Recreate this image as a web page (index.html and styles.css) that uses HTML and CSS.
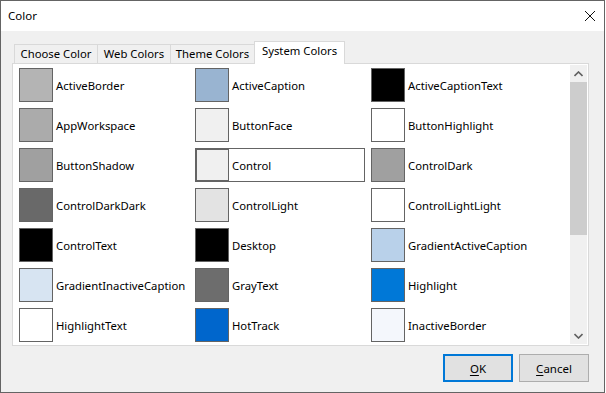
FILE: index.html
```html
<!DOCTYPE html>
<html>
<head>
<meta charset="utf-8">
<title>Color</title>
<link rel="stylesheet" href="styles.css">
</head>
<body>
<div class="window">
  <div class="titlebar">
    <span class="title">Color</span>
    <svg class="close" width="12" height="12" viewBox="0 0 12 12"><path d="M1 1 L11 11 M11 1 L1 11" stroke="#111" stroke-width="1" fill="none"/></svg>
  </div>
  <div class="body">
    <div class="tabs">
      <div class="tab t1">Choose Color</div>
      <div class="tab t2">Web Colors</div>
      <div class="tab t3">Theme Colors</div>
      <div class="tab t4 active">System Colors</div>
    </div>
    <div class="panel">
      <div class="list">
        <div class="grid">
          <div class="item"><span class="sw" style="background:#b4b4b4"></span><span class="lbl">ActiveBorder</span></div>
          <div class="item"><span class="sw" style="background:#99b4d1"></span><span class="lbl">ActiveCaption</span></div>
          <div class="item"><span class="sw" style="background:#000000"></span><span class="lbl">ActiveCaptionText</span></div>
          <div class="item"><span class="sw" style="background:#ababab"></span><span class="lbl">AppWorkspace</span></div>
          <div class="item"><span class="sw" style="background:#f0f0f0"></span><span class="lbl">ButtonFace</span></div>
          <div class="item"><span class="sw" style="background:#ffffff"></span><span class="lbl">ButtonHighlight</span></div>
          <div class="item"><span class="sw" style="background:#a0a0a0"></span><span class="lbl">ButtonShadow</span></div>
          <div class="item selected"><span class="sw" style="background:#f0f0f0"></span><span class="lbl">Control</span></div>
          <div class="item"><span class="sw" style="background:#a0a0a0"></span><span class="lbl">ControlDark</span></div>
          <div class="item"><span class="sw" style="background:#696969"></span><span class="lbl">ControlDarkDark</span></div>
          <div class="item"><span class="sw" style="background:#e3e3e3"></span><span class="lbl">ControlLight</span></div>
          <div class="item"><span class="sw" style="background:#ffffff"></span><span class="lbl">ControlLightLight</span></div>
          <div class="item"><span class="sw" style="background:#000000"></span><span class="lbl">ControlText</span></div>
          <div class="item"><span class="sw" style="background:#000000"></span><span class="lbl">Desktop</span></div>
          <div class="item"><span class="sw" style="background:#b9d1ea"></span><span class="lbl">GradientActiveCaption</span></div>
          <div class="item"><span class="sw" style="background:#d7e4f2"></span><span class="lbl">GradientInactiveCaption</span></div>
          <div class="item"><span class="sw" style="background:#6d6d6d"></span><span class="lbl">GrayText</span></div>
          <div class="item"><span class="sw" style="background:#0078d7"></span><span class="lbl">Highlight</span></div>
          <div class="item"><span class="sw" style="background:#ffffff"></span><span class="lbl">HighlightText</span></div>
          <div class="item"><span class="sw" style="background:#0066cc"></span><span class="lbl">HotTrack</span></div>
          <div class="item"><span class="sw" style="background:#f4f7fc"></span><span class="lbl">InactiveBorder</span></div>
        </div>
        <div class="scrollbar">
          <div class="arrow up"><svg width="9" height="6" viewBox="0 0 9 6"><path d="M0.5 5 L4.5 1 L8.5 5" stroke="#606060" stroke-width="1.6" fill="none"/></svg></div>
          <div class="track"><div class="thumb"></div></div>
          <div class="arrow down"><svg width="9" height="6" viewBox="0 0 9 6"><path d="M0.5 1 L4.5 5 L8.5 1" stroke="#606060" stroke-width="1.6" fill="none"/></svg></div>
        </div>
      </div>
    </div>
    <div class="buttons">
      <button class="btn default"><u>O</u>K</button>
      <button class="btn"><u>C</u>ancel</button>
    </div>
  </div>
</div>
</body>
</html>
```
FILE: styles.css
```css
html, body {
  margin: 0;
  padding: 0;
  background: #ffffff;
}
body {
  font-family: "Noto Sans", "Open Sans", sans-serif;
  font-size: 11.3px;
  color: #000;
}
.window {
  width: 605px;
  height: 393px;
  box-sizing: border-box;
  border: 1px solid #646464;
  display: flex;
  flex-direction: column;
  background: #f0f0f0;
}
.titlebar {
  height: 30px;
  background: #ffffff;
  display: flex;
  align-items: center;
  justify-content: space-between;
  padding: 0 8px 0 7px;
  flex: none;
}
.title {
  font-size: 11.5px;
  line-height: 16px;
}
.close {
  display: block;
}
.body {
  flex: 1;
  padding: 10px 15px 0 11px;
  display: flex;
  flex-direction: column;
}
.tabs {
  display: flex;
  align-items: flex-end;
  height: 22px;
  padding-left: 2px;
  position: relative;
  z-index: 1;
}
.tab {
  box-sizing: border-box;
  height: 19px;
  border: 1px solid #d9d9d9;
  border-bottom: none;
  background: #f0f0f0;
  display: flex;
  align-items: center;
  justify-content: center;
  line-height: 16px;
  padding-bottom: 1px;
}
.tab + .tab {
  margin-left: -1px;
}
.t1 { width: 84px; }
.t2 { width: 74px; }
.t3 { width: 85px; }
.t4 { width: 91px; }
.tab.active {
  height: 23px;
  background: #ffffff;
  margin-bottom: -1px;
  padding-bottom: 4px;
}
.panel {
  box-sizing: border-box;
  width: 577px;
  height: 283px;
  border: 1px solid #d9d9d9;
  background: #ffffff;
  padding: 1px;
}
.list {
  display: flex;
  height: 100%;
  overflow: hidden;
}
.grid {
  flex: 1;
  display: grid;
  grid-template-columns: repeat(3, 170px);
  grid-auto-rows: 34px;
  column-gap: 6px;
  row-gap: 6px;
  padding: 3px 0 0 5px;
  overflow: hidden;
  align-content: start;
}
.item {
  display: flex;
  align-items: center;
  box-sizing: border-box;
  height: 34px;
}
.item.selected {
  box-shadow: inset 0 0 0 1px #646464;
}
.sw {
  box-sizing: border-box;
  width: 34px;
  height: 34px;
  border: 1px solid #646464;
  flex: none;
}
.item.selected .sw {
  border-width: 2px 1px 2px 2px;
}
.lbl {
  margin-left: 3px;
  white-space: nowrap;
}
.scrollbar {
  width: 17px;
  flex: none;
  background: #f0f0f0;
  display: flex;
  flex-direction: column;
}
.arrow {
  height: 17px;
  display: flex;
  align-items: center;
  justify-content: center;
  flex: none;
}
.arrow svg { display: block; }
.track {
  flex: 1;
}
.thumb {
  height: 153px;
  background: #cdcdcd;
}
.buttons {
  display: flex;
  justify-content: flex-end;
  gap: 6px;
  margin-top: 8px;
}
.btn {
  box-sizing: border-box;
  width: 70px;
  height: 28px;
  background: #e1e1e1;
  border: 1px solid #adadad;
  font-family: "Noto Sans", "Open Sans", sans-serif;
  font-size: 11.5px;
  color: #000;
  padding: 0;
  margin: 0;
}
.btn.default {
  border: 2px solid #0078d7;
}
.btn u {
  text-decoration-thickness: 1px;
  text-underline-offset: 2px;
}
```
